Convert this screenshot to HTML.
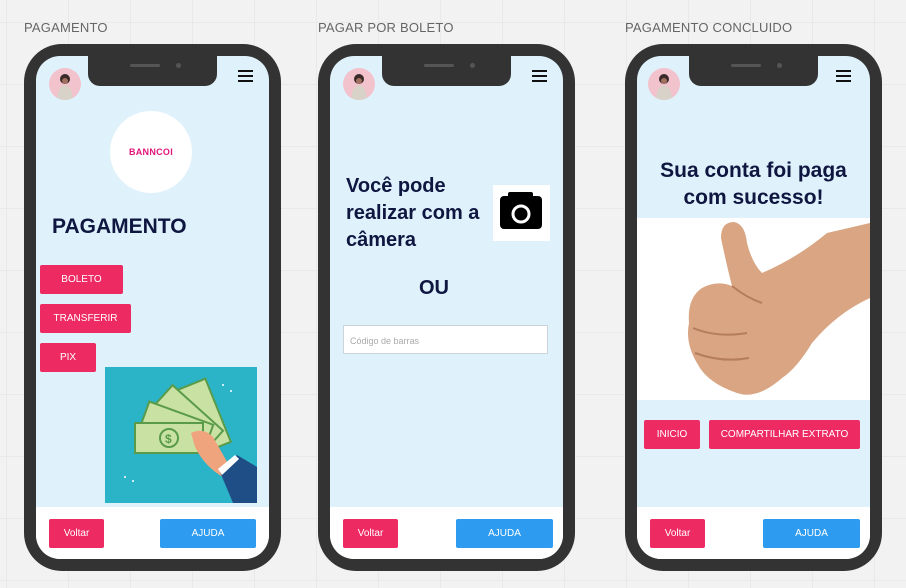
<!DOCTYPE html>
<html><head><meta charset="utf-8">
<style>
*{margin:0;padding:0;box-sizing:border-box}
body{width:906px;height:588px;overflow:hidden;position:relative;background:#f2f2f2;font-family:"Liberation Sans",Arial,sans-serif;
background-image:linear-gradient(to right,#e9e9e9 1px,transparent 1px),linear-gradient(to bottom,#e9e9e9 1px,transparent 1px);background-size:62px 62px;background-position:6px 22px}
.a{position:absolute}
.lbl{position:absolute;top:20px;font-size:13px;color:#666;letter-spacing:0.2px}
.phone{position:absolute;top:44px;width:257px;height:527px;background:#333;border-radius:38px}
.screen{position:absolute;left:12px;top:12px;width:233px;height:503px;background:#dff2fc;border-radius:24px;overflow:hidden}
.notch{position:absolute;left:52px;top:0;width:129px;height:30px;background:#333;border-radius:0 0 12px 12px}
.notch:before{content:"";position:absolute;left:42px;top:8px;width:30px;height:3px;border-radius:2px;background:#555}
.notch:after{content:"";position:absolute;left:88px;top:7px;width:5px;height:5px;border-radius:50%;background:#555}
.foot{position:absolute;left:0;top:451px;width:233px;height:52px;background:#fff}
.btn{position:absolute;background:#ee2a63;color:#fff;font-size:10px;display:flex;align-items:center;justify-content:center;border-radius:2px}
.blue{background:#2d9bef}
.ham{position:absolute;left:202px;top:14px;width:15px;height:12px;border-top:2.5px solid #111;border-bottom:2.5px solid #111}
.ham:after{content:"";position:absolute;left:0;top:2.5px;width:15px;height:2.5px;background:#111}
.av{position:absolute;left:13px;top:12px;width:32px;height:32px;border-radius:50%;background:#f2c3cd;overflow:hidden}
.h{color:#0f1640;font-weight:bold;font-family:"Liberation Sans",Arial,sans-serif}
</style></head><body>
<div class="lbl" style="left:24px">PAGAMENTO</div>
<div class="lbl" style="left:318px">PAGAR POR BOLETO</div>
<div class="lbl" style="left:625px">PAGAMENTO CONCLUIDO</div>

<!-- phone 1 -->
<div class="phone" style="left:24px"><div class="screen">
 <div class="av"><svg width="32" height="32"><circle cx="16" cy="11" r="5" fill="#3a2a2a"/><path d="M8 32 Q9 18 16 17 Q23 18 24 32Z" fill="#d8d2c8"/><circle cx="16" cy="13" r="3" fill="#a07060"/></svg></div>
 <div class="ham"></div>
 <div class="a" style="left:74px;top:55px;width:82px;height:82px;border-radius:50%;background:#fff;display:flex;align-items:center;justify-content:center;color:#e0157b;font-weight:900;font-size:9px;letter-spacing:0.3px">BANNCOI</div>
 <div class="a h" style="left:16px;top:159px;font-size:21px">PAGAMENTO</div>
 <div class="btn" style="left:4px;top:209px;width:83px;height:29px">BOLETO</div>
 <div class="btn" style="left:4px;top:248px;width:91px;height:29px">TRANSFERIR</div>
 <div class="btn" style="left:4px;top:287px;width:56px;height:29px">PIX</div>
 <svg class="a" style="left:69px;top:311px" width="152" height="136" viewBox="0 0 152 136">
  <rect width="152" height="136" fill="#2bb3c8"/>
  <g fill="#c9e2a3" stroke="#5a9b4a" stroke-width="2">
   <rect x="30" y="56" width="68" height="30" transform="rotate(68 98 86)"/>
   <rect x="30" y="56" width="68" height="30" transform="rotate(42 98 86)"/>
   <rect x="30" y="56" width="68" height="30" transform="rotate(20 98 86)"/>
   <rect x="30" y="56" width="68" height="30"/>
  </g>
  <circle cx="64" cy="71" r="9" fill="none" stroke="#5a9b4a" stroke-width="2"/>
  <text x="60" y="76" font-size="12" fill="#5a9b4a" font-weight="bold">$</text>
  <path d="M86 66 Q98 60 108 70 L125 100 L118 110 Q100 100 90 80Z" fill="#f0a47e"/>
  <path d="M115 105 L132 88 L152 100 L152 136 L128 136Z" fill="#1f4e86"/>
  <path d="M113 102 L130 88 L134 92 L117 108Z" fill="#fff"/>
  <g fill="#fff"><circle cx="118" cy="18" r="1"/><circle cx="126" cy="24" r="1"/><circle cx="20" cy="110" r="1"/><circle cx="28" cy="114" r="1"/></g>
 </svg>
 <div class="foot"></div>
 <div class="btn" style="left:13px;top:463px;width:55px;height:29px">Voltar</div>
 <div class="btn blue" style="left:124px;top:463px;width:96px;height:29px">AJUDA</div>
 <div class="notch"></div>
</div></div>

<!-- phone 2 -->
<div class="phone" style="left:318px"><div class="screen">
 <div class="av"><svg width="32" height="32"><circle cx="16" cy="11" r="5" fill="#3a2a2a"/><path d="M8 32 Q9 18 16 17 Q23 18 24 32Z" fill="#d8d2c8"/><circle cx="16" cy="13" r="3" fill="#a07060"/></svg></div>
 <div class="ham"></div>
 <div class="a h" style="left:16px;top:117px;font-size:20px;line-height:27px">Você pode<br>realizar com a<br>câmera</div>
 <div class="a" style="left:163px;top:129px;width:57px;height:56px;background:#fff">
  <svg width="57" height="56"><rect x="7" y="11" width="42" height="33" rx="4" fill="#000"/><rect x="15" y="7" width="25" height="8" rx="2" fill="#000"/><circle cx="28" cy="29" r="8" fill="none" stroke="#fff" stroke-width="3"/></svg>
 </div>
 <div class="a h" style="left:0;width:208px;text-align:center;top:221px;font-size:20px">OU</div>
 <div class="a" style="left:13px;top:269px;width:205px;height:29px;background:#fff;border:1px solid #ccd4da;font-size:9px;color:#aaa;padding:10px 0 0 6px">Código de barras</div>
 <div class="foot"></div>
 <div class="btn" style="left:13px;top:463px;width:55px;height:29px">Voltar</div>
 <div class="btn blue" style="left:126px;top:463px;width:97px;height:29px">AJUDA</div>
 <div class="notch"></div>
</div></div>

<!-- phone 3 -->
<div class="phone" style="left:625px"><div class="screen">
 <div class="av" style="left:11px"><svg width="32" height="32"><circle cx="16" cy="11" r="5" fill="#3a2a2a"/><path d="M8 32 Q9 18 16 17 Q23 18 24 32Z" fill="#d8d2c8"/><circle cx="16" cy="13" r="3" fill="#a07060"/></svg></div>
 <div class="ham" style="left:199px"></div>
 <div class="a h" style="left:0;width:233px;text-align:center;top:101px;font-size:21px;line-height:27px">Sua conta foi paga<br>com sucesso!</div>
 <svg class="a" style="left:0;top:162px" width="233" height="182" viewBox="0 0 233 182">
  <rect width="233" height="182" fill="#fff"/>
  <path d="M233 5 L233 80 Q200 95 175 125 Q160 150 145 160 Q120 182 100 175 Q70 165 60 145 Q48 125 52 105 Q50 80 65 70 Q80 62 95 68 Q88 40 84 20 Q84 4 97 4 Q108 6 110 25 Q115 45 125 55 Q160 40 190 15 Z" fill="#d9a582"/>
  <path d="M95 68 Q110 80 125 85 M56 110 Q80 120 110 115 M58 135 Q85 145 112 140" fill="none" stroke="#b57d5c" stroke-width="2"/>
 </svg>
 <div class="btn" style="left:7px;top:364px;width:56px;height:29px">INICIO</div>
 <div class="btn" style="left:72px;top:364px;width:151px;height:29px">COMPARTILHAR EXTRATO</div>
 <div class="foot"></div>
 <div class="btn" style="left:13px;top:463px;width:55px;height:29px">Voltar</div>
 <div class="btn blue" style="left:126px;top:463px;width:97px;height:29px">AJUDA</div>
 <div class="notch"></div>
</div></div>
</body></html>
